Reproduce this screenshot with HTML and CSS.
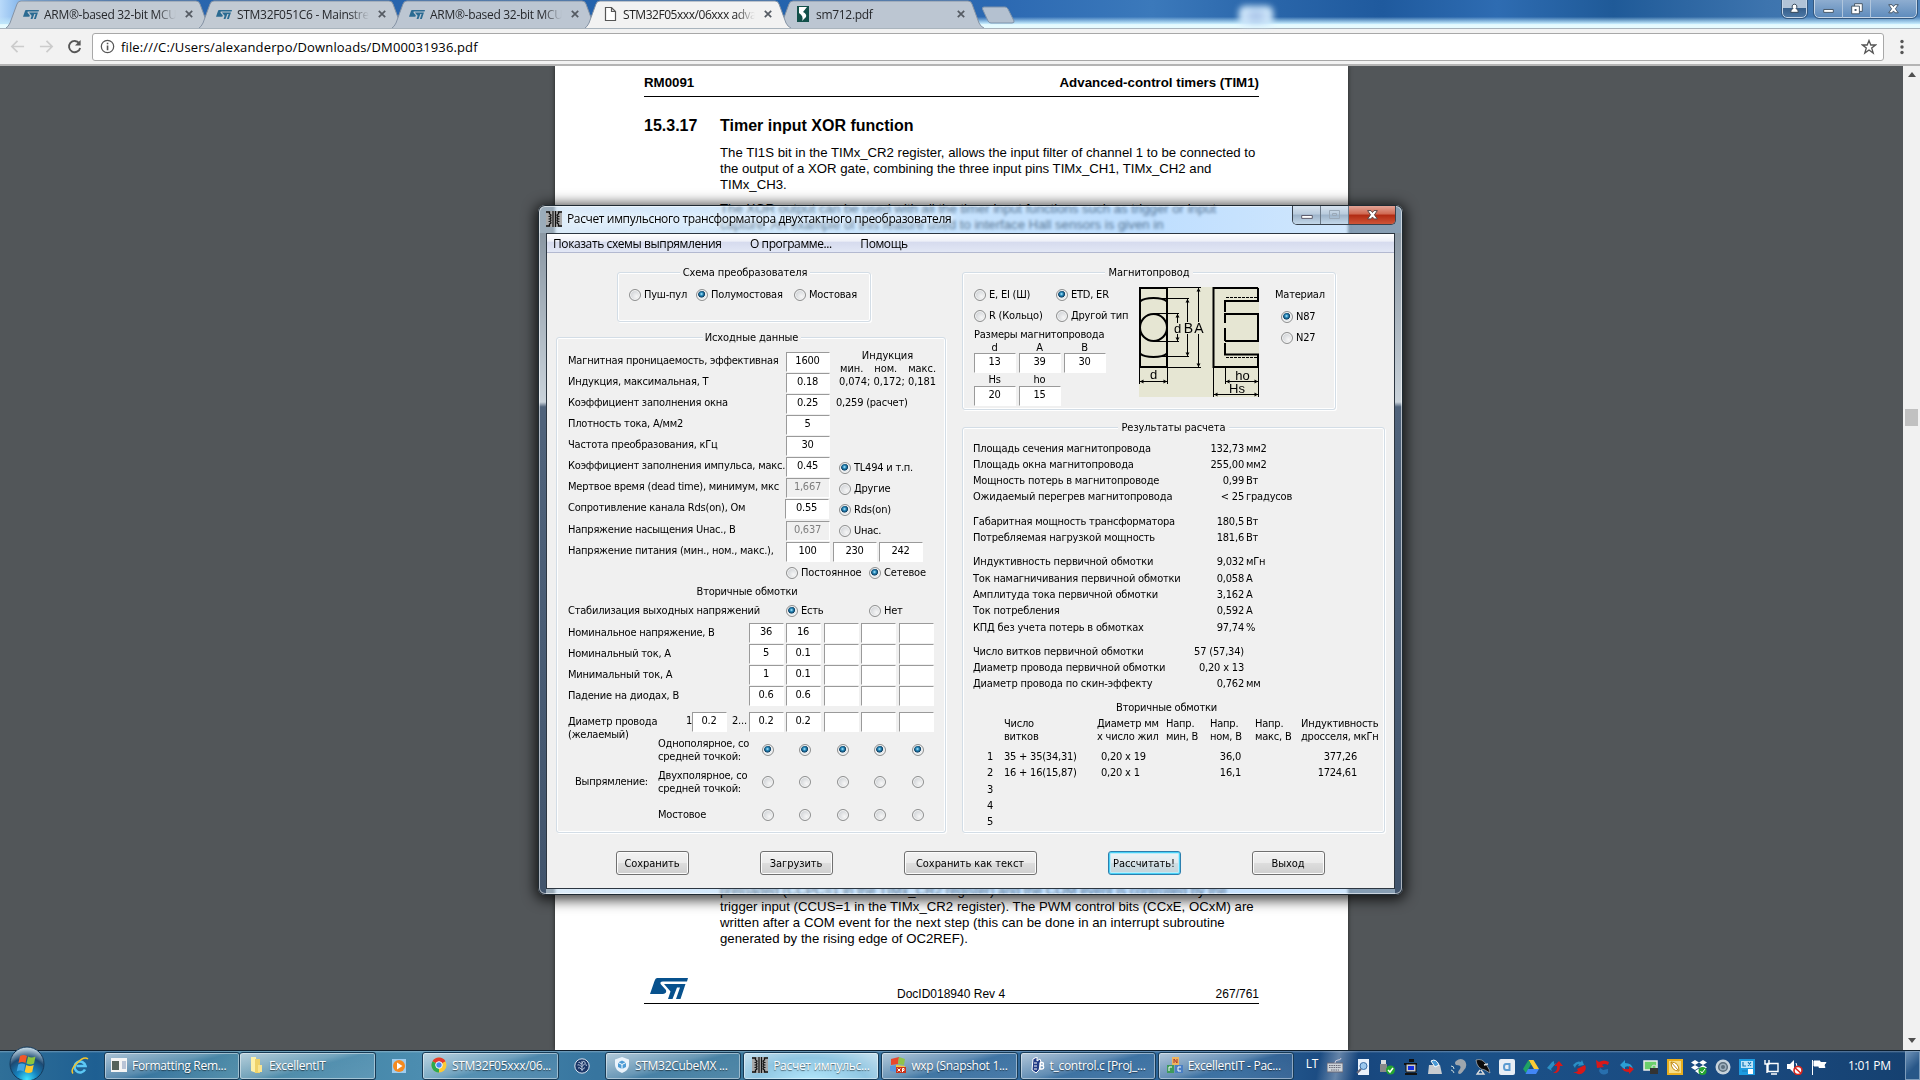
FILE: index.html
```html
<!DOCTYPE html>
<html lang="ru">
<head>
<meta charset="utf-8">
<title>STM32F05xxx/06xxx advanced</title>
<link rel="stylesheet" href="styles.css">
</head>
<body>
<svg class="defs" width="0" height="0">
  <symbol id="st" viewBox="0 0 38 21"><path d="M7 0H38L37 3.4H13Q9 3.600 11 6.500L16 12Q17 15.500 13 16H0L4.500 3Q5.500 0 7 0Z"/><path d="M14 6H35.500L30.500 21H26L30 9.500H27L22.500 21H18L20.500 13.500Z"/></symbol>
  <symbol id="close" viewBox="0 0 8 8"><path d="M.8.8 7.200 7.200M7.200.8.8 7.200" stroke="#555b63" stroke-width="1.700"/></symbol>
  <symbol id="coil" viewBox="0 0 16 16"><path d="M0 0h16v16H0z" fill="#aaa"/><path d="M7 0v16M9.500 0v16" stroke="#111" stroke-width="1.200"/><path d="M0 1h3.500v2q3 1 0 2.500q3 1 0 2.500q3 1 0 2.500q3 1 0 2.500V15H0M16 1h-3.500v2q-3 1 0 2.500q-3 1 0 2.500q-3 1 0 2.500q-3 1 0 2.500V15H16" fill="none" stroke="#111" stroke-width="1.300"/></symbol>
</svg>

<header class="tabstrip">
  <div class="tab"><svg class="shape" viewBox="0 0 206 28" preserveAspectRatio="none"><path d="M0 28Q2 27 4 23L11 4Q12 1 15 1H190Q193 1 194 4L201 23Q203 27 206 28"/></svg><svg class="fav st"><use href="#st"/></svg><span class="label">ARM®-based 32-bit MCU</span><svg class="x"><use href="#close"/></svg></div>
  <div class="tab"><svg class="shape" viewBox="0 0 206 28" preserveAspectRatio="none"><path d="M0 28Q2 27 4 23L11 4Q12 1 15 1H190Q193 1 194 4L201 23Q203 27 206 28"/></svg><svg class="fav st"><use href="#st"/></svg><span class="label">STM32F051C6 - Mainstre</span><svg class="x"><use href="#close"/></svg></div>
  <div class="tab"><svg class="shape" viewBox="0 0 206 28" preserveAspectRatio="none"><path d="M0 28Q2 27 4 23L11 4Q12 1 15 1H190Q193 1 194 4L201 23Q203 27 206 28"/></svg><svg class="fav st"><use href="#st"/></svg><span class="label">ARM®-based 32-bit MCU</span><svg class="x"><use href="#close"/></svg></div>
  <div class="tab active"><svg class="shape" viewBox="0 0 206 28" preserveAspectRatio="none"><path d="M0 28Q2 27 4 23L11 4Q12 1 15 1H190Q193 1 194 4L201 23Q203 27 206 28"/></svg><svg class="fav" viewBox="0 0 16 16"><path d="M3.500 1.500h6l4 4v9h-10zM9.500 1.500v4h4" fill="#fff" stroke="#555" stroke-width="1.200"/></svg><span class="label tight">STM32F05xxx/06xxx adva</span><svg class="x"><use href="#close"/></svg></div>
  <div class="tab"><svg class="shape" viewBox="0 0 206 28" preserveAspectRatio="none"><path d="M0 28Q2 27 4 23L11 4Q12 1 15 1H190Q193 1 194 4L201 23Q203 27 206 28"/></svg><svg class="fav" viewBox="0 0 16 16"><path d="M2 0h12v16H2z" fill="#12504a"/><path d="M4 1h8L8 6q4 2 3 5l-4 4q2-5-3-8z" fill="#fff"/></svg><span class="label">sm712.pdf</span><svg class="x"><use href="#close"/></svg></div>
  <svg class="newtab" viewBox="0 0 35 18"><path d="M3 1H24Q26 1 27 3L33 15Q33.500 17 31 17H10Q8 17 7 15L1.500 3Q1 1 3 1Z" fill="#b4c1d0" stroke="#7e93ab"/></svg>
  <span class="glow"></span>
  <div class="winctl user"><svg viewBox="0 0 24 18"><path d="M12 4a2.500 2.500 0 0 1 1.500 4.500q2.500.5 2.500 4h-8q0-3.500 2.500-4A2.500 2.500 0 0 1 12 4z" fill="#fff" stroke="#345"/></svg></div>
  <div class="winctl trio">
    <svg viewBox="0 0 28 18"><path d="M9 9.500h10v3H9z" fill="#fff" stroke="#456"/></svg>
    <svg viewBox="0 0 28 18"><path d="M12 3.500h8v8h-8z" fill="#fff" stroke="#456"/><path d="M9 6h8v8H9z" fill="#fff" stroke="#456"/><path d="M12 9h2v2h-2z" fill="#456"/></svg>
    <svg class="wide" viewBox="0 0 47 18"><path d="M18.500 4.500h3.500l1.500 2 1.500-2h3.500l-3 4.300 3 4.200H25l-1.500-2-1.500 2h-3.500l3-4.200z" fill="#fff" stroke="#456"/></svg>
  </div>
</header>

<nav class="toolbar">
  <svg class="nav" viewBox="0 0 16 16"><path d="M15 8H2.500M8 2 2 8l6 6" fill="none" stroke="#ccc" stroke-width="1.800"/></svg>
  <svg class="nav" viewBox="0 0 16 16"><path d="M1 8h12.500M8 2l6 6-6 6" fill="none" stroke="#ccc" stroke-width="1.800"/></svg>
  <svg class="nav" viewBox="0 0 16 16"><path d="M13 4.500A6 6 0 1 0 14 9.500" fill="none" stroke="#555" stroke-width="2"/><path d="M14.500 1v6h-6z" fill="#555"/></svg>
  <div class="omnibox">
    <svg class="info" viewBox="0 0 16 16"><circle cx="8" cy="8" r="6.600" fill="none" stroke="#555" stroke-width="1.300"/><path d="M7.200 7h1.700v5H7.200zM7.200 4h1.700v1.700H7.200z" fill="#555"/></svg>
    <span>file:///C:/Users/alexanderpo/Downloads/DM00031936.pdf</span>
    <svg class="star" viewBox="0 0 16 16"><path d="M8 1.500 9.800 6h4.700L10.700 9l1.500 5L8 11l-4.200 3 1.500-5L1.500 6h4.700z" fill="none" stroke="#555" stroke-width="1.300"/></svg>
  </div>
  <svg class="dots" viewBox="0 0 4 16"><circle cx="2" cy="2.500" r="1.700"/><circle cx="2" cy="8" r="1.700"/><circle cx="2" cy="13.500" r="1.700"/></svg>
</nav>

<main class="viewer">
  <article class="page">
    <div class="runhead"><span>RM0091</span><span>Advanced-control timers (TIM1)</span></div>
    <h2><span class="num">15.3.17</span>Timer input XOR function</h2>
    <p>The TI1S bit in the TIMx_CR2 register, allows the input filter of channel 1 to be connected to<br>the output of a XOR gate, combining the three input pins TIMx_CH1, TIMx_CH2 and<br>TIMx_CH3.</p>
    <p>The XOR output can be used with all the timer input functions such as trigger or input<br>capture. An example of this feature used to interface Hall sensors is given in</p>
    <p class="tail">preloaded (CCPC=1 in the TIMx_CR2 register) and the COM event is controlled by the<br>trigger input (CCUS=1 in the TIMx_CR2 register). The PWM control bits (CCxE, OCxM) are<br>written after a COM event for the next step (this can be done in an interrupt subroutine<br>generated by the rising edge of OC2REF).</p>
    <div class="runfoot"><svg class="logo"><use href="#st"/></svg><span>DocID018940 Rev 4</span><span>267/761</span></div>
  </article>
  <div class="scrollbar"><i class="up"></i><i class="thumb"></i><i class="down"></i></div>
</main>

<section class="dialog">
  <div class="titlebar"><svg class="coil"><use href="#coil"/></svg><span>Расчет импульсного трансформатора двухтактного преобразователя</span>
    <div class="ctl">
      <svg class="b" viewBox="0 0 28 18"><path d="M9 9.500h11v3H9z" fill="#fff" stroke="#556"/></svg>
      <svg class="b" viewBox="0 0 27 18"><path d="M8.500 4.500h10v8h-10zM11.500 7.500h4v2h-4z" fill="none" stroke="#9aa9b8"/></svg>
      <svg class="b red" viewBox="0 0 47 18"><path d="M19 4.500h3.500l1.500 2 1.500-2H29l-3 4.300 3 4.200h-3.500l-1.500-2-1.500 2H19l3-4.200z" fill="#fff" stroke="#544"/></svg>
    </div>
  </div>
  <div class="client">
    <div class="menu"><span>Показать схемы выпрямления</span><span>О программе...</span><span>Помощь</span></div>
    <div class="columns">
      <div class="col">
        <div class="group scheme"><div class="title">Схема преобразователя</div>
          <div class="opts"><label class="rb"><i></i>Пуш-пул</label><label class="rb"><i class="on"></i>Полумостовая</label><label class="rb"><i></i>Мостовая</label></div>
        </div>
        <div class="group source"><div class="title">Исходные данные</div>
          <div class="params">
            <span>Магнитная проницаемость, эффективная</span><b>1600</b>
            <div class="induction"><div>Индукция</div><div class="mnm"><span>мин.</span><span>ном.</span><span>макс.</span></div><div>0,074; 0,172; 0,181</div></div>
            <span>Индукция, максимальная, Т</span><b>0.18</b>
            <span>Коэффициент заполнения окна</span><b>0.25</b><span class="calc">0,259 (расчет)</span>
            <span>Плотность тока, А/мм2</span><b>5</b>
            <span>Частота преобразования, кГц</span><b>30</b>
            <span>Коэффициент заполнения импульса, макс.</span><b>0.45</b><label class="rb"><i class="on"></i>TL494 и т.п.</label>
            <span>Мертвое время (dead time), минимум, мкс</span><b class="off">1,667</b><label class="rb"><i></i>Другие</label>
            <span>Сопротивление канала Rds(on), Ом</span><b class="shift">0.55</b><label class="rb"><i class="on"></i>Rds(on)</label>
            <span>Напряжение насыщения Uнас., В</span><b class="off">0,637</b><label class="rb"><i></i>Uнас.</label>
            <span>Напряжение питания (мин., ном., макс.),</span><b>100</b><div class="pair"><b>230</b><b>242</b></div>
          </div>
          <div class="opts supply"><label class="rb"><i></i>Постоянное</label><label class="rb"><i class="on"></i>Сетевое</label></div>
          <div class="sub">Вторичные обмотки</div>
          <div class="opts stab"><span>Стабилизация выходных напряжений</span><label class="rb"><i class="on"></i>Есть</label><label class="rb"><i></i>Нет</label></div>
          <div class="windings">
            <span>Номинальное напряжение, В</span><b>36</b><b>16</b><b></b><b></b><b></b>
            <span>Номинальный ток, А</span><b>5</b><b>0.1</b><b></b><b></b><b></b>
            <span>Минимальный ток, А</span><b>1</b><b>0.1</b><b></b><b></b><b></b>
            <span>Падение на диодах, В</span><b>0.6</b><b>0.6</b><b></b><b></b><b></b>
          </div>
          <div class="windings wire">
            <div class="wirelabel"><span class="two">Диаметр провода<br>(желаемый)</span><span>1</span><b>0.2</b><span class="more">2...</span></div><b>0.2</b><b>0.2</b><b></b><b></b><b></b>
          </div>
          <div class="rect">
            <span></span><span class="two">Однополярное, со<br>средней точкой:</span><i class="on"></i><i class="on"></i><i class="on"></i><i class="on"></i><i class="on"></i>
            <span class="cap">Выпрямление:</span><span class="two">Двухполярное, со<br>средней точкой:</span><i></i><i></i><i></i><i></i><i></i>
            <span></span><span>Мостовое</span><i></i><i></i><i></i><i></i><i></i>
          </div>
        </div>
      </div>
      <div class="col">
        <div class="group core"><div class="title">Магнитопровод</div>
          <div class="corebody">
            <div class="shape-opts">
              <div class="types"><label class="rb"><i></i>E, EI (Ш)</label><label class="rb"><i class="on"></i>ETD, ER</label><label class="rb"><i></i>R (Кольцо)</label><label class="rb"><i></i>Другой тип</label></div>
              <div class="dimtitle">Размеры магнитопровода</div>
              <div class="dims"><span>d</span><span>A</span><span>B</span><b>13</b><b>39</b><b>30</b></div>
              <div class="dims second"><span>Hs</span><span>ho</span><span></span><b>20</b><b>15</b></div>
            </div>
            <svg class="diagram" viewBox="0 0 120 110">
              <path d="M0 0h120v110H0z" fill="#e6e6d3"/>
              <g fill="none" stroke="#000" stroke-width="2"><path d="M1 1h27v79H1zM1 14.500Q5 11 14.500 11T28 14.500M1 66.500Q5 70 14.500 70T28 66.500"/><circle cx="14.500" cy="40.500" r="13.500"/><path d="M119 1H74.500V80H119V67.500H86V56M119 67.500V80M119 1V14H86V25M86 54H119V27H86V36M86 41V54"/></g>
              <path d="M28 .5H62M14 11.500H50M15 26.500H40M15 54.500H40M14 69.500H50M28 80.500H62M38.500 27V36M38.500 47V54M48.500 12V35M48.500 47V69M59.500 1V35M59.500 47V80M.5 81V97M28.500 81V97M1 94.500H28M86.500 81V97M87 94.500H119M74.500 81V110M119.500 81V110M75 107.500H119" fill="none" stroke="#000"/>
              <path d="M87 10.500H119M87 70.500H119" stroke="#000" stroke-dasharray="3 1"/>
              <path d="M38.500 27l2 3.500h-4zM38.500 54l2-3.500h-4zM48.500 12l2 3.500h-4zM48.500 69l2-3.500h-4zM59.500 1l2 3.500h-4zM59.500 80l2-3.500h-4zM1 94.500l3.500-2v4zM28 94.500l-3.500-2v4zM87 94.500l3.500-2v4zM119 94.500l-3.500-2v4zM75 107.500l3.500-2v4zM119 107.500l-3.500-2v4z"/>
              <g font-family="Liberation Sans, sans-serif" font-size="13" letter-spacing="0" text-anchor="middle"><text x="38.500" y="45.500">d</text><text x="49.500" y="45.500" font-size="14">B</text><text x="59.800" y="45.500" font-size="14">A</text><text x="14.500" y="92">d</text><text x="103.500" y="92.500">ho</text><text x="98" y="105.500">Hs</text></g>
            </svg>
            <div class="material"><div>Материал</div><label class="rb"><i class="on"></i>N87</label><label class="rb"><i></i>N27</label></div>
          </div>
        </div>
        <div class="group results"><div class="title">Результаты расчета</div>
          <div class="list">
            <span>Площадь сечения магнитопровода</span><em>132,73</em><span>мм2</span>
            <span>Площадь окна магнитопровода</span><em>255,00</em><span>мм2</span>
            <span>Мощность потерь в магнитопроводе</span><em>0,99</em><span>Вт</span>
            <span>Ожидаемый перегрев магнитопровода</span><em>&lt; 25</em><span>градусов</span>
          </div>
          <div class="list">
            <span>Габаритная мощность трансформатора</span><em>180,5</em><span>Вт</span>
            <span>Потребляемая нагрузкой мощность</span><em>181,6</em><span>Вт</span>
          </div>
          <div class="list">
            <span>Индуктивность первичной обмотки</span><em>9,032</em><span>мГн</span>
            <span>Ток намагничивания первичной обмотки</span><em>0,058</em><span>А</span>
            <span>Амплитуда тока первичной обмотки</span><em>3,162</em><span>А</span>
            <span>Ток потребления</span><em>0,592</em><span>А</span>
            <span>КПД без учета потерь в обмотках</span><em>97,74</em><span>%</span>
          </div>
          <div class="list">
            <span>Число витков первичной обмотки</span><em>57 (57,34)</em><span></span>
            <span>Диаметр провода первичной обмотки</span><em>0,20 x 13</em><span></span>
            <span>Диаметр провода по скин-эффекту</span><em>0,762</em><span>мм</span>
          </div>
          <div class="sub">Вторичные обмотки</div>
          <div class="sec head"><span></span><span>Число<br>витков</span><span>Диаметр мм<br>х число жил</span><span>Напр.<br>мин, В</span><span>Напр.<br>ном, В</span><span>Напр.<br>макс, В</span><span>Индуктивность<br>дросселя, мкГн</span></div>
          <div class="sec"><span>1</span><span>35 + 35(34,31)</span><span class="wd">0,20 x 19</span><span></span><em class="nom">36,0</em><span></span><em class="ind">377,26</em></div>
          <div class="sec"><span>2</span><span>16 + 16(15,87)</span><span class="wd">0,20 x 1</span><span></span><em class="nom">16,1</em><span></span><em class="ind">1724,61</em></div>
          <div class="sec"><span>3</span></div>
          <div class="sec"><span>4</span></div>
          <div class="sec"><span>5</span></div>
        </div>
      </div>
    </div>
    <div class="buttons"><button>Сохранить</button><button>Загрузить</button><button class="long">Сохранить как текст</button><button class="default">Рассчитать!</button><button>Выход</button></div>
  </div>
</section>

<footer class="taskbar">
  <svg class="orb" viewBox="0 0 36 36"><defs><radialGradient id="og" cx=".5" cy=".95" r=".9"><stop offset="0" stop-color="#3fe4ff"/><stop offset=".35" stop-color="#1583bf"/><stop offset=".7" stop-color="#1d4a73"/><stop offset="1" stop-color="#b9cfdd"/></radialGradient></defs><circle cx="18" cy="18" r="17" fill="url(#og)" stroke="#143a5c"/><path d="M11 10q3.500-2 7 0l-1.500 7q-3.500-2-7 0z" fill="#f0582a"/><path d="M19 10.500q3.500 2 7.500 0L25 17.500q-3.500 2-7.500 0z" fill="#8cc63e"/><path d="M9.200 18.500q3.500-2 7 0l-1.500 7q-3.500-2-7 0z" fill="#42a4e0"/><path d="M17.200 19q3.500 2 7.500 0l-1.500 7q-3.500 2-7.500 0z" fill="#fdc72e"/></svg>
  <svg class="ie" viewBox="0 0 18 18"><path d="M14 12.500A5.500 5.500 0 1 1 14.500 9H5.500" fill="none" stroke="#5cc8f5" stroke-width="2.600"/><path d="M2 16.500Q-1 13 6 6T17 2" fill="none" stroke="#f5c62c" stroke-width="1.500"/></svg>
  <div class="task"><svg viewBox="0 0 16 16"><path d="M0 1h16v14H0z" fill="#f4f4f4"/><path d="M1 4h7v9H1z" fill="#56635c"/><path d="M11 4h4v8h-4z" fill="#b9c4d6"/></svg>Formatting Rem...</div>
  <div class="task second"><svg viewBox="0 0 16 16"><path d="M3 0h5l1 16-6-2z" fill="#fdf0a8"/><path d="M7 2h5v14H7z" fill="#eed26a"/><path d="M10 8h4v7h-4z" fill="#f8e491"/></svg>ExcellentIT</div>
  <div class="pin media"><svg viewBox="0 0 16 16"><path d="M1 1h14v14H1z" fill="#9fcdf0"/><circle cx="8" cy="8" r="6" fill="#f58a1f"/><path d="M6 4.500 11.500 8 6 11.500z" fill="#fff"/></svg></div>
  <div class="task chrome"><svg viewBox="0 0 16 16"><circle cx="8" cy="8" r="7.500" fill="#fcc934"/><path d="M8 8 1.500 4.300A7.500 7.500 0 0 1 14.500 4.300z" fill="#e33b2e"/><path d="M8 8 1.500 4.200A7.500 7.500 0 0 0 8 15.500z" fill="#2da94f"/><circle cx="8" cy="8" r="3.300" fill="#4688f1" stroke="#fff"/></svg>STM32F05xxx/06...</div>
  <div class="pin"><svg viewBox="0 0 16 16"><circle cx="8" cy="8" r="7.200" fill="#1b3668" stroke="#dbe5f2"/><path d="M4.500 4.500q1.500-1 2 1t2-1 3 1M3.500 7q2-1 3 1t3-1 3 1M4 10q2-1 3 1t4-1.500M8 3v10" fill="none" stroke="#dbe5f2" stroke-width=".8"/></svg></div>
  <div class="task t"><svg viewBox="0 0 16 16"><path d="M8 0l7 2.500V8q0 5-7 8-7-3-7-8V2.500z" fill="#eaf3fb"/><path d="M8 3.500l4 2v4.500l-4 2-4-2V5.500z" fill="#4b9bd6"/><path d="M4 5.500l4 2 4-2M8 7.500V12" stroke="#fff" fill="none"/></svg>STM32CubeMX ...</div>
  <div class="task t current"><svg><use href="#coil"/></svg>Расчет импульс...</div>
  <div class="task t"><svg viewBox="0 0 16 16"><path d="M1 2l8-2-1 7-7 1z" fill="#e8472b"/><path d="M9 0l6 2-1 6-6-1z" fill="#8fc34a"/><path d="M0 9l7-1-1 7-6-1z" fill="#5a95dc"/><path d="M6 8l9 1v2H6z" fill="#f6c83c"/><path d="M6 10h10v6H6z" fill="#c8331b"/><path d="M7.500 11.500l3 3M10.500 11.500l-3 3M12.500 15v-3.500h1.500v2h-1.500" stroke="#fff" fill="none"/></svg>wxp (Snapshot 1...</div>
  <div class="task t"><svg viewBox="0 0 16 16"><path d="M4 2l4-2v4l3-2 1 3-2 8-3 3-4-3z" fill="#223b86" stroke="#fff"/><path d="M5 6h3M5 9h3M5 12h3" stroke="#fff"/><path d="M11 5.500h2a1.500 1.500 0 0 1 0 3h-2m2 0a1.500 1.500 0 0 1 0 3.500h-2V5.500" fill="none" stroke="#fff" stroke-width="1.300"/></svg>t_control.c [Proj_...</div>
  <div class="task t"><svg viewBox="0 0 16 16"><path d="M5 0h7v8H5z" fill="#ecb45e"/><path d="M0 8h7v8H0z" fill="#3f9a5c"/><path d="M8 8h8v8H8z" fill="#4a7fc4"/><path d="M7 6V2l3 4V2" stroke="#a33" fill="none"/><path d="M2 14v-4h3M14 10h-3v4h3" stroke="#fff" fill="none"/></svg>ExcellentIT - Рас...</div>
  <div class="tray">
    <span class="lang">LT</span>
    <svg class="kb" viewBox="0 0 16 16"><path d="M0 6h16v9H0z" fill="#cdd3d8" stroke="#667"/><path d="M2 8.500h12M2 10.500h12M4 13h8" stroke="#667" stroke-dasharray="1.500 .8"/><path d="M8 6q0-3 3-3t3-2" fill="none" stroke="#ccd"/></svg>
    <svg viewBox="0 0 16 16"><path d="M3 0h11v16H3z" fill="#e9f1fb"/><circle cx="8.500" cy="7" r="3.500" fill="#9cc8ee" stroke="#3b6ea5"/><path d="M6 10l-4 4" stroke="#667" stroke-width="2"/></svg>
    <svg viewBox="0 0 16 16"><path d="M2 1h5v4H2z" fill="#ddd"/><path d="M1 5h7v8H1z" fill="#888"/><circle cx="11.500" cy="11" r="4.500" fill="#25a52f"/><path d="M9 11l2 2 3-4" fill="none" stroke="#fff" stroke-width="1.500"/></svg>
    <svg viewBox="0 0 16 16"><path d="M6 0h5v3H6zM1 4h13v2H1z" fill="#111"/><path d="M3 5h10v8H3z" fill="#ccc" stroke="#111"/><path d="M5 7h6v4H5z" fill="#1630e0"/><path d="M2 14h12v2H2z" fill="#111"/></svg>
    <svg viewBox="0 0 16 16"><path d="M2 6h11l2 9H1z" fill="#c8ccd0"/><path d="M4 2q5-3 8 4l-4 2z" fill="#4b9bd6" stroke="#fff"/></svg>
    <svg viewBox="0 0 16 16"><path d="M5 2q5-4 9 0 3 5-1 9-4 6-6 3 0-2 2-4 2-4-4-4-2-2 0-4z" fill="#9ea6ad"/><path d="M0 7q3 0 3 3M0 11q2 0 3 3" fill="none" stroke="#cdd"/></svg>
    <svg viewBox="0 0 16 16"><path d="M1 1q6-2 10 4t4 9l-5-3q-8-1-9-10z" fill="#0c0c0c" stroke="#ccc" stroke-width=".6"/><path d="M9 6l4-1M5 11l-3 4h7l-3-4" stroke="#ddd" fill="none" stroke-width="1.300"/></svg>
    <svg viewBox="0 0 16 16"><rect width="16" height="16" rx="2" fill="#e8eef5"/><path d="M10.500 4v8M10.500 5H7q-2 0-2 3t2 3h3.500" fill="none" stroke="#5b9bd1" stroke-width="2"/></svg>
    <svg viewBox="0 0 16 16"><path d="M5.500 1h5L16 10h-5z" fill="#fcc934"/><path d="M5.500 1 8 5.500 3 14 0 10z" fill="#1fa363"/><path d="M5 10h11l-3 5H2.500z" fill="#4286f5"/></svg>
    <svg viewBox="0 0 16 16"><path d="M0 9 5 3l2-1v3l2-1-5 6 1 2z" fill="#2b8fc4"/><path d="M6 14q5-2 4-7H7l5-5 4 5h-3q0 8-7 7z" fill="#d81818"/></svg>
    <svg viewBox="0 0 16 16"><path d="M2 6q4-5 8-3l1-2 2 5-6 1 1-2Q5 5 4 9z" fill="#2b8fc4"/><path d="M2 14l5-2-1-2 8-4q2 4-1 7-4 4-8 1z" fill="#d81818"/></svg>
    <svg viewBox="0 0 16 16"><path d="M1 1l3 2q5-3 10 0l-1 3q-4-2-6 0l2 2-7 1z" fill="#d81818"/><path d="M5 9l3 2 5-1v4q-6 4-9-2z" fill="#286fae"/></svg>
    <svg viewBox="0 0 16 16"><path d="M1 6l5-5v3q7 0 8 6-4-4-8-2v3z" fill="#2b9fd4"/><path d="M15 10l-5 5v-2Q4 13 3 9q4 2 7 1V7z" fill="#d81818"/></svg>
    <svg viewBox="0 0 16 16"><path d="M1 2h13v9H1z" fill="#6bd06b" stroke="#eee" stroke-width="1.500"/><path d="M7 9h8v6H7z" fill="#333"/><path d="M9 9V7q2-2 4 0v2" fill="none" stroke="#ddd"/></svg>
    <svg viewBox="0 0 16 16"><path d="M0 0h16v16H0z" fill="#e9ae1e"/><path d="M2 2h12v12H2z" fill="#f6dd8a"/><path d="M4 3q8 0 8 9-8 0-8-9zl7 8" fill="#fff" stroke="#c28a10"/></svg>
    <svg viewBox="0 0 16 16"><path d="M4 1l4 2.500L4 6 0 3.500zM12 1l4 2.500L12 6 8 3.500zM4 6l4 2.500L4 11 0 8.500zM12 6l4 2.500-4 2.500-4-2.500zM4 12l4-2.500 4 2.500-4 3z" fill="#fff"/><circle cx="11.500" cy="12" r="4" fill="#25a52f"/><path d="M9.500 12l1.500 2 3-4" fill="none" stroke="#fff"/></svg>
    <svg viewBox="0 0 16 16"><circle cx="8" cy="8" r="7.500" fill="#c7d3dc"/><circle cx="8" cy="8" r="4.300" fill="#9fb0bd" stroke="#5b6e7d" stroke-width="1.500"/><circle cx="8" cy="8" r="2" fill="#5b6e7d"/></svg>
    <svg viewBox="0 0 16 16"><path d="M0 0h16v16H0z" fill="#1d9be0"/><path d="M2 2h12v7H2z" fill="#bfe4f8"/><path d="M4 3v4h3M9 3l3 4M12 3L9 7M3 12h5" fill="none" stroke="#1678b8" stroke-width="1.200"/><path d="M9 10h5v5H9z" fill="#fff"/></svg>
    <svg viewBox="0 0 16 16"><path d="M5 4.500h10v8H5zM8 15h6M2 1v4h4V1M4 5v9" fill="none" stroke="#fff" stroke-width="1.400"/></svg>
    <svg viewBox="0 0 16 16"><path d="M0 5h3l4-4v13l-4-4H0z" fill="#fff"/><path d="M9 4q2 3 0 7" fill="none" stroke="#fff"/><circle cx="11" cy="11.500" r="4" fill="#fff" stroke="#d8241b" stroke-width="1.600"/><path d="M8.200 9l5.500 5" stroke="#d8241b" stroke-width="1.600"/></svg>
    <svg viewBox="0 0 16 16"><path d="M1.500 1v15M3 2h6v1.500h6l-2 2.500 1 2.500H8V7H3z" fill="#fff" stroke="#fff"/></svg>
    <span class="clock">1:01 PM</span>
    <i class="peek"></i>
  </div>
</footer>
</body>
</html>
```
FILE: styles.css
```css
* { box-sizing: border-box; }
html, body { margin: 0; height: 100%; overflow: hidden; }
body { display: flex; flex-direction: column; width: 1920px; height: 1080px; font-family: "Open Sans", "Noto Sans", sans-serif; font-size: 12px; color: #000; }
svg { display: block; flex: none; }
.defs { position: absolute; }

/* browser tab strip */
.tabstrip { height: 28px; flex: none; display: flex; padding-left: 6px; position: relative; background: linear-gradient(#0000 60%, #bfe6fa 84%, #e6fbff 88%), linear-gradient(90deg, #b9dafa 0, #6ea6e4 1.5%, #2b66ae 6%, #2262ac 38%, #2c69b2 52%, #3b79bb 60%, #2a66aa 66%, #1f5a9e 72%, #2e6cb2 78%, #1f5a98 84%, #3d74ae 92%, #4e84bc 100%); }
.tab { position: relative; width: 206px; margin-right: -13px; height: 28px; display: flex; align-items: center; padding: 0 19px 2px 17px; color: #26282c; }
.tab .shape { position: absolute; left: 0; top: 0; width: 206px; height: 28px; }
.tab .shape path { fill: #bcc6d2; stroke: #8593a5; }
.tab:nth-child(1) .shape path, .tab:nth-child(2) .shape path { fill: #c2cad3; }
.tab.active { z-index: 2; color: #222; }
.tab.active .shape path { fill: #f2f2f2; }
.tab .fav { position: relative; width: 16px; height: 16px; margin-right: 5px; top: 1px; }
.tab .fav.st { fill: #2b6b92; height: 9px; }
.tab .label { position: relative; top: 1px; width: 134px; white-space: nowrap; overflow: hidden; letter-spacing: -.3px; -webkit-mask-image: linear-gradient(90deg, #000 85%, transparent); mask-image: linear-gradient(90deg, #000 85%, transparent); }
.tab .label.tight { letter-spacing: -.45px; }
.tab .x { position: relative; width: 8px; height: 8px; margin-left: 9px; top: 1px; }
.newtab { width: 35px; height: 18px; margin: 6px 0 0 10px; }
.glow { width: 34px; height: 20px; margin: 6px 0 0 223px; border-radius: 6px; background: radial-gradient(#9fbbe4, #d9f0ff 70%); filter: blur(3px); }
.winctl { display: flex; height: 19px; margin-top: -1px; border: 1px solid #c5d5e6; border-radius: 0 0 5px 5px; outline: 1px solid #34587f; }
.winctl.user { width: 25px; margin-left: auto; background: linear-gradient(#b1c3d7 45%, #375f8b 50%, #4c77a4); }
.winctl.user svg { width: 23px; height: 18px; }
.winctl.trio { width: 103px; margin: -1px 3px 0 7px; background: linear-gradient(#8eadd0, #5f8cbd); }
.trio svg { width: 28px; height: 18px; border-right: 1px solid #b0c6dd; }
.trio svg.wide { width: 45px; border: 0; }

/* toolbar */
.toolbar { height: 38px; flex: none; display: flex; align-items: center; padding: 0 16px 0 10px; background: #f2f2f2; border-top: 1px solid #a9b4bd; border-bottom: 2px solid #b4b4b4; }
.nav { width: 15px; height: 15px; margin-right: 14px; }
.nav + .nav { margin-right: 13px; }
.omnibox { width: 1792px; height: 28px; margin-left: -2px; border: 1px solid #a8a8a8; border-radius: 3px; background: #fff; display: flex; align-items: center; font-size: 13px; letter-spacing: .14px; padding: 0 6px 0 7px; }
.nav:nth-child(3) { margin-right: 12px; }
.info { width: 15px; height: 15px; margin-right: 6px; }
.star { width: 16px; height: 16px; margin-left: auto; }
.dots { width: 4px; height: 16px; margin-left: 16px; fill: #555; }

/* document viewer */
.viewer { flex: 1; min-height: 0; display: flex; justify-content: flex-end; background: #525659; overflow: hidden; }
.page { width: 793px; margin-right: 555px; padding: 9px 89px 0; background: #fff; box-shadow: 0 0 4px #222; font: 13.2px/16px "Liberation Sans", Arial, sans-serif; }
.runhead { display: flex; justify-content: space-between; height: 22px; border-bottom: 1px solid #000; font-weight: bold; font-size: 13.3px; }
.page h2 { display: flex; margin: 19px 0 9px; font-size: 16px; line-height: 20px; }
.num { width: 76px; }
.page p { margin: 0 0 8px 76px; white-space: nowrap; }
.page p.tail { margin: 650px 0 0 76px; letter-spacing: .02px; }
.runfoot { display: grid; grid-template-columns: 253px 1fr auto; align-items: end; margin-top: 31px; height: 26px; padding-bottom: 1px; border-bottom: 1px solid #000; font-size: 12px; }
.logo { width: 38px; height: 21px; margin: 0 0 3px 6px; fill: #07518d; }
.scrollbar { width: 17px; background: #f1f1f1; display: flex; flex-direction: column; align-items: center; }
.scrollbar i { display: block; width: 0; border: 4px solid transparent; }
.scrollbar .up { border-bottom: 5px solid #505050; border-top: 0; margin-top: 6px; }
.scrollbar .thumb { width: 13px; height: 17px; border: 0; background: #c1c1c1; margin-top: 332px; }
.scrollbar .down { border-top: 5px solid #505050; border-bottom: 0; margin-top: auto; margin-bottom: 7px; }

/* calculator window */
.dialog { position: absolute; left: 538px; top: 205px; width: 865px; height: 690px; padding: 0 8px 6px; border-radius: 7px; box-shadow: 0 0 0 1px #1f2a33 inset, 0 0 0 2px #ffffff90 inset, 0 2px 13px 3px #000000c0;
  background: linear-gradient(#8a97a3, #c9d2da 24.5%, #50637b 25.2%, #40536b) 0 28px / 8px 100% no-repeat, linear-gradient(#8a97a3, #c9d2da 24.5%, #50637b 25.2%, #40536b) 100% 28px / 8px 100% no-repeat, linear-gradient(90deg, #c8e0f4a0, #a6d2fa90 30%, #8cc5ff90 70%, #b5d8fa90); backdrop-filter: blur(1.8px); }
.titlebar { display: flex; align-items: center; height: 28px; letter-spacing: -.365px; }
.titlebar .coil { width: 16px; height: 16px; margin-right: 5px; }
.titlebar span { text-shadow: 0 0 6px #fff, 0 0 8px #fff; white-space: nowrap; margin-top: -1px; }
.ctl { display: flex; align-self: flex-start; height: 19px; margin: 1px -1px 0 auto; border: 1px solid #39424d; border-top: 0; border-radius: 0 0 5px 5px; overflow: hidden; }
.ctl .b { width: 28px; height: 18px; background: linear-gradient(#d6e3ef, #b9cbdd 45%, #9db3c9 50%, #c4d8ea); border-right: 1px solid #6a7887; }
.ctl .b.red { width: 46px; border: 0; background: linear-gradient(#e3a497, #cf6750 45%, #b02a12 50%, #cf5437); }
.client { width: 849px; height: 656px; border: 1px solid #2c3641; background: #f0f0f0; font: 11px/16px "DejaVu Sans Condensed", "DejaVu Sans", sans-serif; letter-spacing: -.22px; }
.menu { display: flex; height: 19px; gap: 28.5px; padding: 1px 0 0 6px; align-items: center; border-bottom: 1px solid #b3b9d0; background: linear-gradient(#fff, #eef0f8 40%, #d6dbee 45%, #e2e7f5); font: 12px/18px "Open Sans", "Noto Sans", sans-serif; letter-spacing: -.4px; white-space: nowrap; }
.columns { display: grid; grid-template-columns: 390px 423px; gap: 16px; padding: 19px 0 0 9px; height: 598px; white-space: nowrap; }
.col { display: flex; flex-direction: column; }
.group { display: flex; flex-direction: column; border: 1px solid #d3dde6; border-radius: 3px; box-shadow: 0 0 0 1px #fff inset, 1px 1px 0 #fff; }
.title { align-self: center; height: 15px; line-height: 16px; margin: -8px 0 -1px; padding: 0 3px; background: #f0f0f0; letter-spacing: -.08px; }
.sub { text-align: center; }
.rb { display: flex; align-items: center; gap: 3px; height: 18px; }
.rb i, .rect i { flex: none; width: 12px; height: 12px; border-radius: 50%; border: 1px solid #8e8f8f; box-shadow: 0 0 0 1px #f6f6f6 inset; background: radial-gradient(circle at 65% 65%, #f6f6f6, #c3c7cc); }
.rb i.on, .rect i.on { background: radial-gradient(circle at 45% 40%, #bfeeff 0, #2c8fc0 1.5px, #0c3f63 3.200px, #e5e9ec 3.900px); }
b { display: block; width: 44px; height: 20px; padding-right: 1px; border: 1px solid #fff; border-top-color: #9a9a9a; border-left-color: #9a9a9a; background: #fff; font-weight: normal; line-height: 15px; text-align: center; }
b.off { background: #f0f0f0; color: #7d7d7d; }
b.shift { margin-left: -1px; }
em { font-style: normal; text-align: right; }

.scheme { width: 254px; height: 50px; margin: 0 0 15px 61px; }
.scheme .title { margin-left: 2px; }
.scheme .opts { display: grid; grid-template-columns: 67px 98px auto; padding: 7px 0 0 11px; }
.source { height: 496px; padding-left: 11px; }
.source .title { padding-left: 2px; margin-right: 9px; }
.params { display: grid; grid-template-columns: 218px 45px auto; grid-auto-rows: 21.07px; margin-top: 8px; }
.params > span { grid-column: 1; padding-top: 1px; }
.params > b { grid-column: 2; }
.params > .calc { grid-column: 3; padding-left: 5px; }
.params > .rb { grid-column: 3; padding: 1px 0 0 8px; height: 20px; }
.induction { grid-column: 3; grid-row: 1 / span 2; margin: -3px 0 0 6px; width: 101px; line-height: 13px; text-align: center; letter-spacing: -.05px; }
.mnm { display: flex; justify-content: space-between; padding: 0 2px 0 3px; }
.pair { display: flex; gap: 2px; padding-left: 2px; }
.opts { display: grid; }
.supply { grid-template-columns: 83px auto; height: 20.3px; padding: 0 0 0 218px; align-items: center; letter-spacing: -.12px; }
.source .sub { line-height: 18px; padding-right: 19px; }
.stab { grid-template-columns: 218px 83px auto; height: 20px; align-items: center; }
.windings { display: grid; grid-template-columns: 181px 37px 38px 37px 38px 36px; grid-auto-rows: 21px; margin-top: 2px; }
.windings b { width: 35px; }
.windings > span { line-height: 19px; }
.windings.wire { margin-top: 5px; grid-auto-rows: 20px; }
.wirelabel { display: flex; line-height: 18px; }
.two { line-height: 13px; }
.wirelabel .two { width: 118px; padding-top: 3px; height: 20px; }
.wirelabel > span:nth-child(2) { width: 6px; }
.more { padding-left: 5px; }
.rect { display: grid; grid-template-columns: 90px 91px 37px 38px 37px 38px 36px; grid-template-rows: 32px 32px 34px; align-items: center; margin-top: 2px; }
.rect i { margin-left: 13px; }
.cap { padding-left: 7px; }

.core { width: 374px; height: 138px; margin-bottom: 17px; }
.corebody { display: grid; grid-template-columns: 165px 120px auto; padding-left: 11px; }
.shape-opts { padding-top: 6px; }
.types { display: grid; grid-template-columns: 82px auto; grid-auto-rows: 21px; align-items: center; margin-top: -.5px; }
.dimtitle { line-height: 15px; height: 14px; }
.dims { display: grid; grid-template-columns: 45px 45px 45px; grid-template-rows: 12.5px 20px; line-height: 14px; }
.dims span { width: 41px; text-align: center; }
.dims.second { margin-top: 0; }
.dims b { width: 42px; line-height: 15px; }
.diagram { width: 120px; height: 110px; margin-top: 8px; }
.material { padding: 8px 0 0 16px; }
.material .rb { margin-left: 6px; height: 21px; }
.material .rb:nth-child(2) { margin-top: 3px; }

.results { width: 423px; height: 406px; }
.list { display: grid; grid-template-columns: 211px 60px auto; grid-auto-rows: 16.3px; padding-left: 10px; margin-bottom: 8px; letter-spacing: -.19px; }
.list span:nth-child(3n) { padding-left: 2px; }
.title + .list { margin-top: 6.6px; }
.results .sub { line-height: 14px; padding-right: 14px; margin: 0 0 2.5px; }
.sec { display: grid; grid-template-columns: 17px 93px 69px 44px 45px 46px 84px; height: 16.200px; padding-left: 24px; }
.sec.head { line-height: 13px; height: 32px; }
.wd { padding-left: 4px; }
.nom { width: 31px; }
.ind { width: 56px; }

.buttons { display: flex; gap: 71px; padding-left: 69px; }
button { width: 73px; height: 24px; padding: 1px 1px 0 0; border: 1px solid #707070; border-radius: 3px; background: linear-gradient(#f2f2f2, #ebebeb 48%, #ddd 52%, #cfcfcf); box-shadow: 0 0 0 1px #fcfcfc inset; font: inherit; letter-spacing: -.05px; color: #000; white-space: nowrap; }
button.long { width: 133px; }
button.default { border-color: #2c7fae; background: linear-gradient(#eef4f7, #e2eaee 48%, #cfdde3 52%, #c4d4da); box-shadow: 0 0 0 1px #48d1f7 inset, 0 0 0 2px #b9ecfa inset; }

/* taskbar */
.taskbar { position: relative; height: 30px; flex: none; display: flex; border-top: 1px solid #0d1e2e; background: linear-gradient(#ffffff50, #ffffff00 2px), linear-gradient(100deg, #ffffff00 68.6%, #ffffff55 69.6%, #ffffff00 70.600%), linear-gradient(90deg, #2f6f98, #1e5f92 5%, #3c7f9f 12%, #4c8db0 22%, #37759f 31%, #3a789c 38%, #30699c 50%, #2c659a 64%, #17457c 70%, #1b5188 76%, #1a4a80 90%, #15406f); color: #fff; letter-spacing: -.3px; }
.orb { width: 36px; height: 36px; margin: -5px 0 0 9px; }
.ie { width: 18px; height: 18px; margin: 6px 15px 0 26px; }
.task { display: flex; align-items: center; width: 136px; height: 28px; padding: 0 0 2px 6px; margin-top: 1px; border: 1px solid #173a55; border-radius: 3px; box-shadow: 0 0 0 1px #ffffff70 inset; background: linear-gradient(165deg, #ffffffa0 0, #ffffff40 45%, #ffffff14 55%, #ffffff20); white-space: nowrap; text-shadow: 0 1px 1px #0008; }
.task svg, .pin svg { width: 16px; height: 16px; margin-right: 5px; }
.task.second { padding-left: 8px; border-left: 0; }
.pin { display: flex; align-items: center; width: 48px; padding-left: 15px; height: 29px; }
.pin.media { width: 46px; }
.pin + .task.chrome { width: 137px; padding-left: 8px; }
.task.chrome + .pin { width: 46px; padding-left: 15px; }
.task.t { width: 136.200px; margin-right: 2px; padding-left: 8px; }
.task.current { background: radial-gradient(ellipse at 50% 120%, #b8ecff, #8fc6e2c0 60%, #ffffff80); background-color: #8fc3df; }
.tray { display: flex; align-items: center; margin-left: auto; height: 29px; }
.tray svg { width: 16px; height: 16px; margin-right: 8px; margin-top: 2px; }
.tray .kb { margin: -2px 12px 0 0; }
.lang { margin: -5px 9px 0 0; }
.clock { width: 44px; margin: 0 13px 0 13px; }
.peek { width: 15px; height: 29px; border: 1px solid #7d9cbb; background: linear-gradient(135deg, #6f93b8, #285788 60%); }
```
